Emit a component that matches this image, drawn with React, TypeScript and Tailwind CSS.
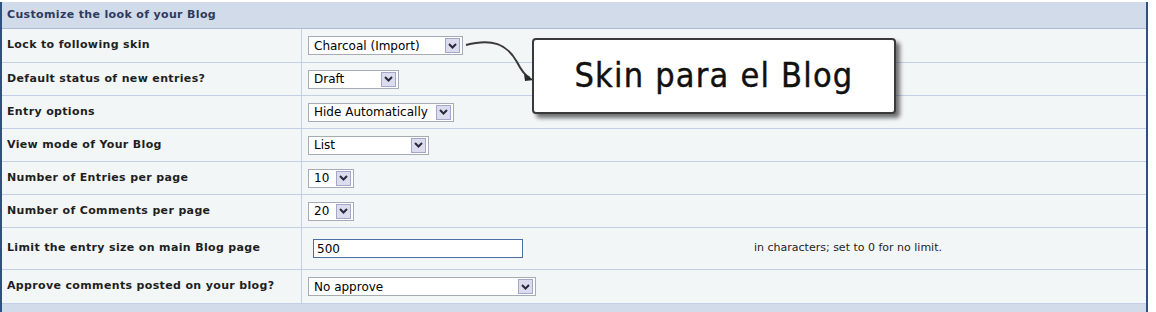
import React from 'react';

const font = { fontFamily: '"DejaVu Sans", Verdana, sans-serif' };

function Select({ value, width }: { value: string; width: number }) {
  return (
    <div
      className="flex items-center justify-between h-[19px] bg-white border border-[#a5acb5] pl-[5px] pr-[2px]"
      style={{ width }}
    >
      <span className="text-[12px] text-black leading-none" style={{ fontFamily: '"DejaVu Sans", Verdana, sans-serif' }}>
        {value}
      </span>
      <span className="flex items-center justify-center w-[15px] h-[15px] border border-[#a3a8c8] bg-[#dcdcef]">
        <svg width="9" height="6" viewBox="0 0 9 6">
          <path d="M1 1 L4.5 4.5 L8 1" fill="none" stroke="#2a2a3a" strokeWidth="2" />
        </svg>
      </span>
    </div>
  );
}

function Row({ label, h = 33, children, extra }: { label: string; h?: number; children: React.ReactNode; extra?: React.ReactNode }) {
  return (
    <div className="grid grid-cols-[300px_1fr] border-b border-[#c3d0e4]" style={{ height: h }}>
      <div className="flex items-center pl-[5px] border-r border-[#c3d0e4] text-[11px] font-bold tracking-[0.35px] text-[#1f1f1f]">
        {label}
      </div>
      <div className="flex items-center pl-[6px]">
        {children}
        {extra}
      </div>
    </div>
  );
}

export default function App() {
  return (
    <div className="w-[1156px] h-[312px] bg-white pt-[2px]" style={font}>
      <div className="relative w-[1148px] border-l-2 border-r-2 border-[#30507f] bg-[#f2f6f7]">
        <div className="h-[27px] bg-[#d2dbea] border-b border-[#aabbd4] flex items-center pl-[5px] text-[11px] font-bold tracking-[0.35px] text-[#2d3b5e]">
          Customize the look of your Blog
        </div>
        <Row label="Lock to following skin" h={34}>
          <Select value="Charcoal (Import)" width={155} />
        </Row>
        <Row label="Default status of new entries?">
          <Select value="Draft" width={91} />
        </Row>
        <Row label="Entry options">
          <Select value="Hide Automatically" width={146} />
        </Row>
        <Row label="View mode of Your Blog">
          <Select value="List" width={121} />
        </Row>
        <Row label="Number of Entries per page">
          <Select value="10" width={46} />
        </Row>
        <Row label="Number of Comments per page">
          <Select value="20" width={46} />
        </Row>
        <Row
          label="Limit the entry size on main Blog page"
          h={42}
          extra={<span className="ml-[231px] text-[11px] text-[#1f1f1f]">in characters; set to 0 for no limit.</span>}
        >
          <div className="ml-[5px] w-[210px] h-[19px] border border-[#4b6fa3] bg-white flex items-center pl-[3px] text-[12px] text-black">
            500
          </div>
        </Row>
        <Row label="Approve comments posted on your blog?" h={34}>
          <Select value="No approve" width={228} />
        </Row>
        <div className="h-[10px] bg-[#d2dbea]" />

        <svg className="absolute left-[460px] top-[34px]" width="80" height="50" viewBox="0 0 80 50">
          <path d="M4 9 C 30 2, 45 8, 55 26 C 60 36, 64 40, 68 42" fill="none" stroke="#3a3a3a" strokeWidth="2" />
          <path d="M62 38 L72 44 L63 45 Z" fill="#2a2a2a" />
        </svg>
        <div
          className="absolute left-[530px] top-[36px] w-[364px] h-[76px] bg-white border-2 border-[#3a3a3a] rounded-[4px] flex items-center justify-center shadow-[4px_4px_4px_rgba(0,0,0,0.55)]"
        >
          <span
            className="text-[34px] text-[#111] tracking-[1.2px] leading-none -mt-[2px] [-webkit-text-stroke:0.4px_#111]"
            style={{ fontFamily: '"DejaVu Sans Condensed", "DejaVu Sans", sans-serif' }}
          >
            Skin para el Blog
          </span>
        </div>
      </div>
    </div>
  );
}
